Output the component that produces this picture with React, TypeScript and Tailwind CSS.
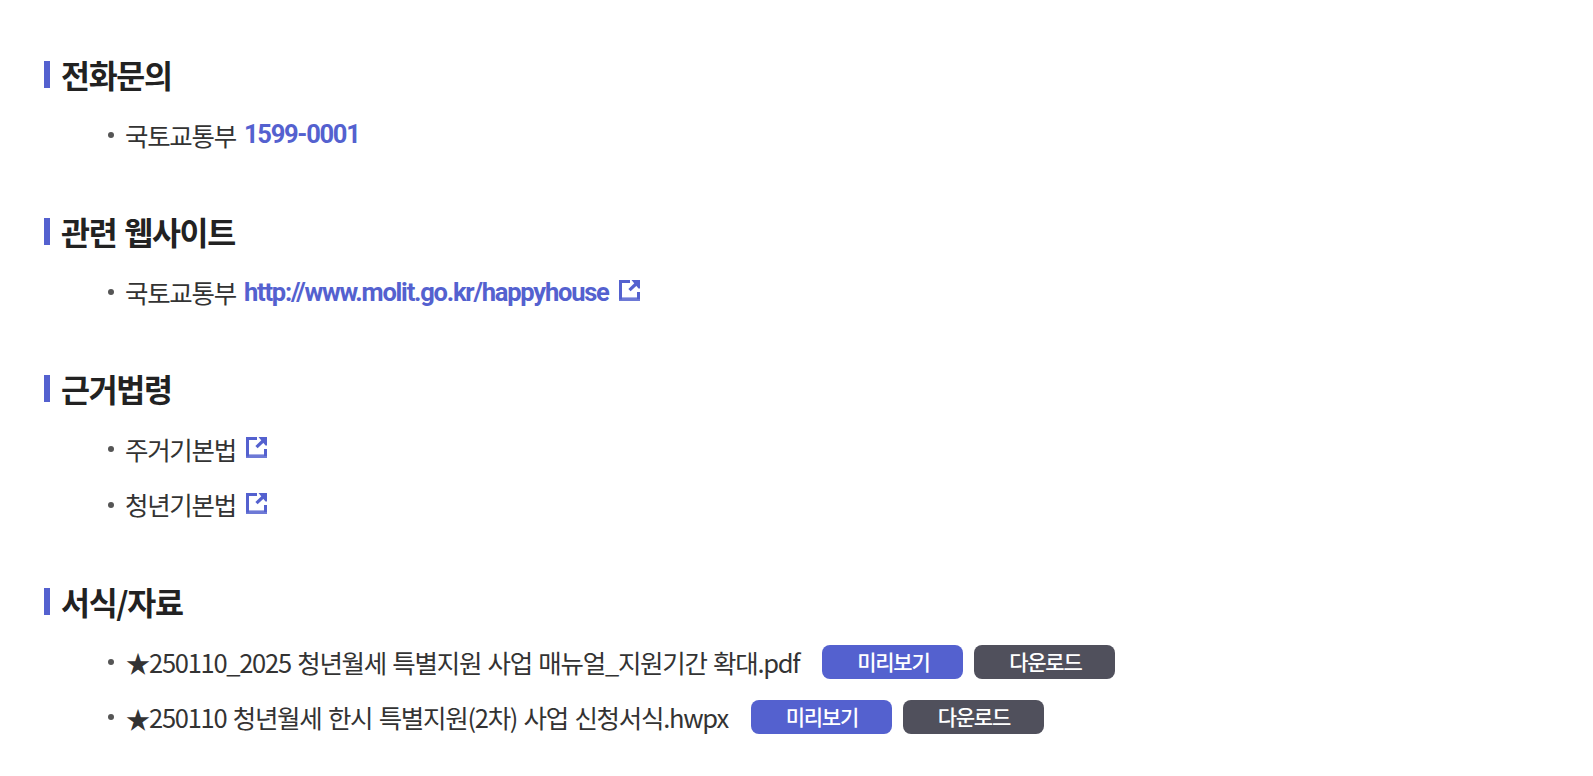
import type { ReactNode } from "react";

function ExternalIcon() {
  return (
    <svg className="ml-[10px] -mt-[3px] h-[21px] w-[21px] shrink-0" viewBox="0 0 21 21" fill="none" stroke="#5461cf">
      <path d="M11 1.5H1.5" strokeWidth="3" />
      <path d="M1.5 0v19.5" strokeWidth="3" />
      <path d="M0 19.2h21" strokeWidth="3.6" strokeOpacity="0.85" />
      <path d="M19.5 12v7" strokeWidth="3" />
      <path d="M10.5 10.2L18 3" strokeWidth="3.2" />
      <path d="M12.5 0H21v8.5h-1.5z" fill="#5461cf" stroke="none" />
    </svg>
  );
}

function Section({ title, children }: { title: string; children: ReactNode }) {
  return (
    <section className="mb-[46.9px]">
      <h2 className="flex h-[44px] items-center text-[31.5px] font-bold tracking-[-1.3px] text-[#222]">
        <span className="mr-[11px] h-[27px] w-[6px] bg-[#5461cf]" />
        {title}
      </h2>
      <ul className="mt-[11px]">{children}</ul>
    </section>
  );
}

function Item({ children }: { children: ReactNode }) {
  return (
    <li className="flex h-[55.3px] items-center pl-16 text-[25.5px] tracking-[-1.275px] text-[#333]">
      <span className="mr-[11px] h-[6px] w-[6px] rounded-full bg-[#555]" />
      {children}
    </li>
  );
}

function FileRow({ name }: { name: string }) {
  return (
    <Item>
      <span className="inline-flex w-[24px] translate-y-[2px] justify-end text-[24.5px]">★</span>
      <span>{name}</span>
      <button className="ml-[23px] h-[34px] w-[141px] rounded-lg bg-[#5461cf] pb-px pl-px text-[21px] font-medium text-white">
        미리보기
      </button>
      <button className="ml-[11px] h-[34px] w-[141px] rounded-lg bg-[#50505c] pb-px pl-px text-[21px] font-medium text-white">
        다운로드
      </button>
    </Item>
  );
}

export default function App() {
  return (
    <main className="h-[776px] overflow-hidden whitespace-nowrap bg-white pl-11 pt-[52.3px] font-['Noto_Sans_CJK_KR',sans-serif] [word-spacing:2px]">
      <Section title="전화문의">
        <Item>
          국토교통부
          <a className="mb-[2px] ml-2 font-['Roboto'] font-bold text-[#5461cf]">1599-0001</a>
        </Item>
      </Section>
      <Section title="관련 웹사이트">
        <Item>
          국토교통부
          <a className="ml-2 font-['Roboto'] font-bold tracking-[-1.22px] text-[#5461cf]">
            http://www.molit.go.kr/happyhouse
          </a>
          <ExternalIcon />
        </Item>
      </Section>
      <Section title="근거법령">
        <Item>주거기본법<ExternalIcon /></Item>
        <Item>청년기본법<ExternalIcon /></Item>
      </Section>
      <Section title="서식/자료">
        <FileRow name="250110_2025 청년월세 특별지원 사업 매뉴얼_지원기간 확대.pdf" />
        <FileRow name="250110 청년월세 한시 특별지원(2차) 사업 신청서식.hwpx" />
      </Section>
    </main>
  );
}
